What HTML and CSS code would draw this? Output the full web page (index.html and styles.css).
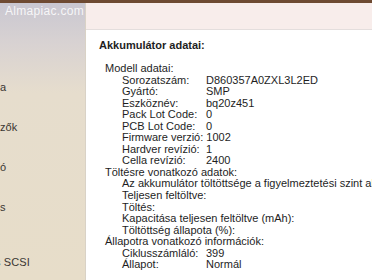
FILE: index.html
```html
<!DOCTYPE html>
<html lang="hu">
<head>
<meta charset="utf-8">
<link rel="stylesheet" href="styles.css">
</head>
<body>
<div class="topbar"></div>
<div class="window">
  <aside class="sidebar">
    <div class="watermark">Almapiac.com</div>
    <ul class="side-list">
      <li>a</li>
      <li>zők</li>
      <li>ó</li>
      <li>s</li>
      <li class="cut">s SCSI</li>
    </ul>
  </aside>
  <main class="pane">
    <div class="pane-header"></div>
    <div class="content">
      <h1 class="title">Akkumulátor adatai:</h1>
      <div class="tree">
        <div class="l1">Modell adatai:</div>
        <div class="l2"><span class="k">Sorozatszám:</span><span class="v">D860357A0ZXL3L2ED</span></div>
        <div class="l2"><span class="k">Gyártó:</span><span class="v">SMP</span></div>
        <div class="l2"><span class="k">Eszköznév:</span><span class="v">bq20z451</span></div>
        <div class="l2"><span class="k">Pack Lot Code:</span><span class="v">0</span></div>
        <div class="l2"><span class="k">PCB Lot Code:</span><span class="v">0</span></div>
        <div class="l2"><span class="k">Firmware verzió:</span><span class="v">1002</span></div>
        <div class="l2"><span class="k">Hardver revízió:</span><span class="v">1</span></div>
        <div class="l2"><span class="k">Cella revízió:</span><span class="v">2400</span></div>
        <div class="l1">Töltésre vonatkozó adatok:</div>
        <div class="l2"><span class="k">Az akkumulátor töltöttsége a figyelmeztetési szint alá</span></div>
        <div class="l2"><span class="k">Teljesen feltöltve:</span></div>
        <div class="l2"><span class="k">Töltés:</span></div>
        <div class="l2"><span class="k">Kapacitása teljesen feltöltve (mAh):</span></div>
        <div class="l2"><span class="k">Töltöttség állapota (%):</span></div>
        <div class="l1">Állapotra vonatkozó információk:</div>
        <div class="l2"><span class="k">Ciklusszámláló:</span><span class="v">399</span></div>
        <div class="l2"><span class="k">Állapot:</span><span class="v">Normál</span></div>
      </div>
    </div>
  </main>
</div>
</body>
</html>
```
FILE: styles.css
```css
html, body {
  margin: 0;
  padding: 0;
  width: 372px;
  height: 280px;
  overflow: hidden;
  background: #ffffff;
  font-family: "Liberation Sans", Arial, sans-serif;
}
.topbar {
  height: 3px;
  background: #6e4a32;
}
.window {
  display: flex;
  height: 277px;
}
.sidebar {
  width: 85px;
  flex: 0 0 85px;
  border-right: 1px solid #d9d2c6;
  background: linear-gradient(to bottom, #c9c7d1 0px, #d8d2d2 40px, #e6ddcd 90px, #e7ddc9 277px);
  overflow: hidden;
  position: relative;
}
.watermark {
  position: absolute;
  left: 5px;
  top: 1px;
  font-size: 12px;
  color: rgba(255, 255, 255, 0.85);
  letter-spacing: 0.3px;
}
.side-list {
  list-style: none;
  margin: 0;
  padding: 78px 0 0 0;
  font-size: 11px;
  color: #3a3632;
  white-space: nowrap;
  letter-spacing: 0.1px;
}
.side-list li {
  height: 40px;
  line-height: 13px;
  padding-left: 0;
}
.side-list li.cut {
  margin-top: 15px;
  text-indent: -5px;
}
.pane {
  flex: 1;
  min-width: 0;
  overflow: hidden;
}
.pane-header {
  height: 26px;
  background: #f8edeb;
  border-bottom: 1px solid #e4dedd;
}
.content {
  padding: 8px 0 0 13px;
  color: #1e1e1e;
  white-space: nowrap;
}
.title {
  margin: 0;
  font-size: 11px;
  font-weight: bold;
  line-height: 14px;
}
.tree {
  margin-top: 11px;
  font-size: 11px;
  line-height: 11.55px;
}
.l1 {
  padding-left: 6px;
}
.l2 {
  display: flex;
  gap: 3px;
  padding-left: 23px;
}
.l2 .k {
  min-width: 81px;
}
```
